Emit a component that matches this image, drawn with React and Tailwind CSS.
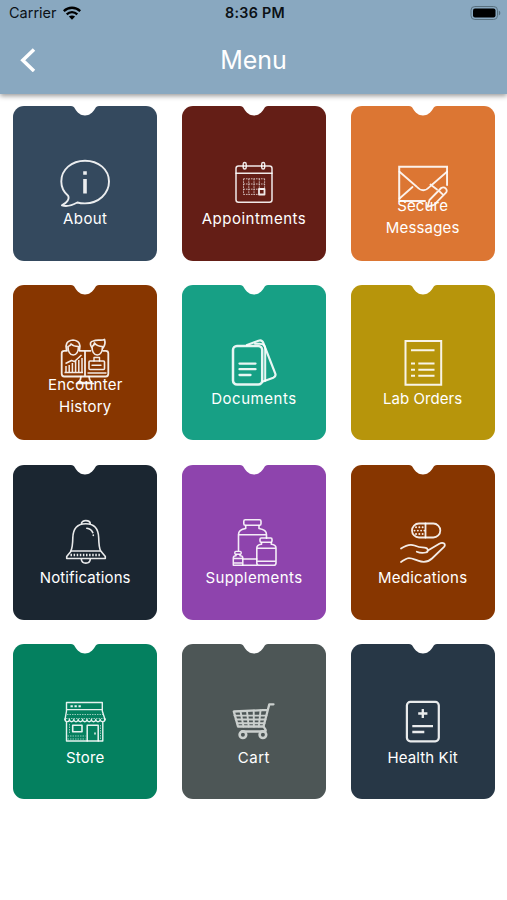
import { clsx } from 'clsx';

const AboutIcon = () => (
  <>
    <path strokeWidth="1.9" d="M25 1.7C11.5 1.7 1.3 10.6 1.3 22.4c0 6 2.6 10.7 6.8 14.3 1.7 3.4-1.4 7.2-6.2 9.6 4.3 1.5 10.3 0 15.4-2.8 2.5.7 5 .9 7.7.9 13.6 0 24-9.8 24-21.8S38.6 1.7 25 1.7z" />
    <path strokeWidth="3.6" strokeLinecap="butt" d="M25 12.2v3.5M25 20v14.5" />
  </>
);

const CalendarIcon = () => (
  <>
    <rect x="7" y="7" width="36" height="36.3" rx="2.5" strokeWidth="1.5" />
    <path strokeWidth="1.4" d="M7 14.2h36" />
    <rect x="14.2" y="3.5" width="3" height="6.5" rx="1.5" strokeWidth="1.4" />
    <rect x="32.7" y="3.5" width="3" height="6.5" rx="1.5" strokeWidth="1.4" />
    <path strokeWidth="1" strokeDasharray="1.6 0.9" strokeLinecap="butt" opacity="0.75" d="M14.500 19.800h21.200M14.500 25h21.200M14.500 30.200h21.200M14.500 35.400h14.500M14.500 19.800v15.600M19.800 19.800v15.600M25 19.800v15.600M30.300 19.800v10M35.600 19.800v10" />
    <rect x="30" y="30" width="5.5" height="5.5" strokeWidth="1.8" />
  </>
);

const MailIcon = () => (
  <>
    <path strokeWidth="2" strokeLinejoin="miter" d="M27 42H1.200V7.800h47.900V26" />
    <path strokeWidth="1.8" d="M1.500 12.700l17 14.800c4.500 5 9 5 13.500 0l17-14.800M1.500 39.500L14.500 28M32.500 25.500l6.500 5" />
    <path strokeWidth="1.8" d="M29.500 47.800l2-6.800 11.700-12c3.300-2 7 1.700 4.800 4.700L36 45.800zM40.500 31.500l5 4.600" />
  </>
);

const EncounterIcon = () => (
  <>
    <path strokeWidth="1.8" d="M7 12.800H4.200c-1.500 0-2.500 1-2.500 2.500v20.500c0 1.800 1 2.700 2.500 2.700h41.600c1.500 0 2.500-1 2.500-2.700V15.300c0-1.500-1-2.500-2.500-2.500H43M19.500 12.800h11M25 13v25.500" />
    <path strokeWidth="1.7" d="M6.500 12c-1.500-5 0-9.500 6.500-10 6.500.5 8 5 6.500 10M8 8.500c0 5 2 8.500 5.200 8.500s5.300-3.500 5.300-8.500C15 8.500 12.500 7.500 11 6c-.5 1.500-1.500 2.300-3 2.500z" />
    <path strokeWidth="1.700" d="M32 10c-3-4-1.500-7 1.500-7 3-2 8 0 11-1.500 1 3 .3 6-1.500 8.500M32 8.500c0 5 2 8.500 5.200 8.500s5.300-3.500 5.300-8.500c-4 0-6-1-8-3.500-.3 2-1 3-2.500 3.500z" />
    <path strokeWidth="1.500" strokeLinecap="butt" d="M6 34v-6M9.200 34v-7M12.400 34v-9M15.600 34V23M18.800 34V22M22 34V20M4.500 34.500H23M5.500 25.500l6-3 3 1 7-6.500" />
    <rect x="29" y="23" width="15.500" height="8.500" rx="1" strokeWidth="1.600" />
    <path strokeWidth="1.400" d="M32 27.300h9M34 23v-3.500h5.500V23M28 35h18" />
    <path strokeWidth="1.700" d="M21 38.500c0 3-1 4.500-2.500 6.200h13c-1.500-1.700-2.500-3.200-2.500-6.200M16.500 45.500h17" />
  </>
);

const DocumentsIcon = () => (
  <>
    <rect x="4" y="8" width="29.200" height="38.500" rx="4" strokeWidth="2.500" />
    <path strokeWidth="2.300" d="M10.500 25.600h16M10.500 31.200h16M10.500 37h11" />
    <path strokeWidth="2.200" d="M18 7l11.500-4.300c2.700-1 4 0 5 2.700l11.800 30.300c.7 2-.1 3.200-2 4L34 43.500" />
    <path strokeWidth="2" d="M26 5.800h4.500c4 0 5.700 1.500 5.700 5v32" />
  </>
);

const LabIcon = () => (
  <path strokeWidth="2" strokeLinecap="butt" strokeLinejoin="miter" d="M7.500 3h35.700v43.700H7.500zM13 12.300h23.500M13 25.600h4M20.300 25.600h16.200M13 31.700h4M20.300 31.700h16.200M13 37.700h4M20.300 37.700h16.200" />
);

const BellIcon = () => (
  <>
    <path strokeWidth="1.600" d="M21.300 6c0-4.500 9-4.500 9 0M10.800 33c1.600-3 1.900-7 2-13C13 11 17 5.800 25.800 5.800S38.500 11 38.700 20c.1 6 .4 10 2 13z" />
    <path strokeWidth="1.600" d="M10.800 33.500L6.700 38.500v2h38.600v-2l-4.100-5M21.300 41c.4 5.500 8.700 5.500 9 0" />
    <path strokeWidth="2.400" strokeDasharray="1.500 1.600" strokeLinecap="butt" d="M10.500 37h31" />
    <path strokeWidth="1.600" d="M26.800 10.300c3 .5 5 2 6 4.300M33.300 17v.4" />
  </>
);

const SupplementsIcon = () => (
  <>
    <rect x="14.800" y="1.800" width="17.200" height="5.400" rx="1.500" strokeWidth="1.600" />
    <path strokeWidth="1.600" d="M16.700 7.500v3c-4 .6-7.200 2.700-7.200 6v16M30 7.500v3c4 .6 7.500 2.700 7.500 6v3.800M9.500 16.700h28M13.800 41h14M13.800 47.300h14" />
    <rect x="31" y="20" width="12" height="4.200" rx="1.200" strokeWidth="1.600" />
    <path strokeWidth="1.600" d="M32.500 24.500v1.700c-3 .3-4.700 1.500-4.700 3.800v15c0 1.600.8 2.300 2.300 2.300h14.600c1.500 0 2.300-.7 2.300-2.300V30c0-2.300-1.700-3.500-4.700-3.800v-1.700M27.800 30.200H47M27.800 43.200H47" />
    <rect x="5.800" y="33.400" width="6.400" height="2.900" rx="1" strokeWidth="1.400" />
    <path strokeWidth="1.500" d="M7 36.500v1.300c-1.500 0-2.700.8-2.700 2.200v7.300h9.500V40c0-1.400-1.300-2.200-2.800-2.200v-1.300M4.300 40.600h9.500M4.300 45h9.500" />
  </>
);

const MedicationsIcon = () => (
  <>
    <rect x="14" y="5.500" width="28.300" height="14" rx="7" strokeWidth="1.800" />
    <path strokeWidth="1.800" d="M27.500 5.500v14" />
    <path strokeWidth="1.900" strokeDasharray="0.1 3.2" d="M18 9.200h8M16.500 12.600h10M18 16h8" />
    <path strokeWidth="1.800" d="M3 30.500c4-2.700 8.500-5 13.500-3 3.500 1.700 6 2 10 2.200 3.800.2 4.500 4 1.300 4.800-3.300.8-6.300.4-9-.8M30.300 32.200l11-6.500c4-2 7.300.5 4.500 3.500L34 40.500c-4.500 4.300-9.500 3.800-14 2.200-6-2.200-8-3.500-11-2.200-2.500 1-4 2.300-6 3.500" />
  </>
);

const StoreIcon = () => (
  <>
    <path strokeWidth="1.400" d="M6.500 14V5.500h35.800V14M6.500 12.600h35.800M6.500 14L5 22.500M42.300 14L45 22.500M6.500 25.500v18.500h36.300V25.500" />
    <path strokeWidth="1.400" d="M5 22c0 3.400 4 3.400 4.400.5.400 2.900 4 2.900 4.400 0 .4 2.900 4 2.900 4.400 0 .4 2.900 4 2.900 4.400 0 .4 2.900 4 2.900 4.400 0 .4 2.900 4 2.900 4.400 0 .4 2.900 4 2.900 4.400 0 .4 2.900 4 2.900 4.400 0 .4 2.900 4.800 2.900 4.800-.5" />
    <path strokeWidth="2" strokeLinecap="butt" d="M10.500 9.300h2.300M14.500 9.300h2.300M18.500 9.300h2.300" />
    <path strokeWidth="0.900" strokeDasharray="1.500 1" strokeLinecap="butt" opacity="0.7" d="M7 17.500h36M6 21.500h38M7.500 39h18M7.500 42h18M40.500 28v15M9.500 27v10" />
    <rect x="12.700" y="28.200" width="9.300" height="6.500" strokeWidth="1.600" />
    <path strokeWidth="1.500" d="M27.200 44V28.200h11V44M35 36v1" />
  </>
);

const CartIcon = () => (
  <>
    <path strokeWidth="2.300" d="M44.500 7.300h-4.200L34.500 29.500H9L4.800 14.500l33.500-1.600" />
    <path strokeWidth="1.900" d="M5.500 18.600h32M6.700 22.500h29.800M8 26.200h27.500M11.500 14.500l3 15M18 14.200l1.700 15.300M24.700 13.800l.2 15.700M31.500 13.500l-1.700 16" />
    <path strokeWidth="2.300" d="M34.500 29.500l2 3.200c.5 1-.1 1.800-1.200 1.800H13" />
    <circle cx="13.900" cy="37.700" r="3.300" strokeWidth="2.600" />
    <circle cx="33.900" cy="37.700" r="3.300" strokeWidth="2.600" />
  </>
);

const HealthIcon = () => (
  <>
    <rect x="8.900" y="4.900" width="31.900" height="39.400" rx="3.500" strokeWidth="2.200" />
    <path strokeWidth="2.300" strokeLinecap="butt" d="M24.800 11.900v9.200M20.200 16.500h9.200M14.300 29.200H35M14.300 35h12" />
  </>
);

const items = [
  { lines: ['About'], icon: AboutIcon, color: 'bg-[#34495e]', tracking: 'tracking-[0.4px]' },
  { lines: ['Appointments'], icon: CalendarIcon, color: 'bg-[#641e16]', tracking: 'tracking-[0.5px]' },
  { lines: ['Secure', 'Messages'], icon: MailIcon, color: 'bg-[#dc7633]', tracking: 'tracking-[0.15px]' },
  { lines: ['Encounter', 'History'], icon: EncounterIcon, color: 'bg-[#873600]', tracking: 'tracking-[0.25px]' },
  { lines: ['Documents'], icon: DocumentsIcon, color: 'bg-[#17a085]', tracking: 'tracking-[0.55px]' },
  { lines: ['Lab Orders'], icon: LabIcon, color: 'bg-[#b7950b]', tracking: 'tracking-[0.05px]' },
  { lines: ['Notifications'], icon: BellIcon, color: 'bg-[#1b2631]', tracking: 'tracking-[0.1px]' },
  { lines: ['Supplements'], icon: SupplementsIcon, color: 'bg-[#8e44ad]', tracking: 'tracking-[0.4px]' },
  { lines: ['Medications'], icon: MedicationsIcon, color: 'bg-[#873600]', tracking: 'tracking-[0.25px]' },
  { lines: ['Store'], icon: StoreIcon, color: 'bg-[#04805f]', tracking: 'tracking-[0.15px]' },
  { lines: ['Cart'], icon: CartIcon, color: 'bg-[#4d5656]', tracking: 'tracking-[0.5px]', iconColor: 'text-[#cbd0ce]' },
  { lines: ['Health Kit'], icon: HealthIcon, color: 'bg-[#273746]', tracking: 'tracking-[0.1px]' },
];

function MenuCard({ item }) {
  const Icon = item.icon;

  return (
    <button className={clsx('relative flex h-[154.7px] flex-col items-center rounded-[11px] pt-[52.8px] text-white', item.color)}>
      {/* Notch */}
      <svg className="absolute -top-px left-1/2 h-[11px] w-[30px] -translate-x-1/2" viewBox="0 0 30 11">
        <path fill="#fff" d="M1 0h28v1c-2 .2-3 1-4 2.700C22.500 7.700 19.500 10.400 15 10.400S7.500 7.700 5 3.700C4 2 3 1.200 1 1z" />
      </svg>

      <svg
        className={clsx('h-[50px] w-[50px] shrink-0', item.iconColor || 'text-white/90')}
        viewBox="0 0 50 50"
        fill="none"
        stroke="currentColor"
        strokeLinecap="round"
        strokeLinejoin="round"
      >
        <Icon />
      </svg>

      <div
        className={clsx(
          'relative text-center text-[15px] leading-[22px] whitespace-nowrap',
          item.lines.length > 1 ? '-mt-[14px]' : '-mt-[0.5px]',
          item.tracking
        )}
      >
        {item.lines.map((line) => (
          <div key={line}>{line}</div>
        ))}
      </div>
    </button>
  );
}

export default function App() {
  return (
    <div className="h-[900px] w-[507px] overflow-hidden bg-white font-['Inter',sans-serif]">
      <header className="relative h-[94px] bg-[#89a8c0] shadow-[0_2px_5px_rgba(0,0,0,0.4)]">
        {/* Status bar */}
        <div className="grid h-[27px] grid-cols-3 items-center pr-[6px] pl-[9px] text-[#0c1116]">
          <div className="flex items-center gap-[6px]">
            <span className="text-[14.5px] leading-none">Carrier</span>
            <svg className="-mt-px h-[14px] w-[18px]" viewBox="0 0 18 14" fill="none" stroke="#000" strokeWidth="2.3">
              <path d="M.8 5.100c4.700-4.500 11.700-4.500 16.400 0M3.700 8.300c3-2.900 7.600-2.900 10.600 0" />
              <path fill="#000" stroke="none" d="M9 13.800l-3.100-3.200c1.800-1.600 4.400-1.600 6.200 0z" />
            </svg>
          </div>
          <span className="text-center text-[14.3px] leading-none font-semibold tracking-[0.3px] whitespace-nowrap">8:36 PM</span>
          <svg className="-mt-px h-[14px] w-[31px] justify-self-end" viewBox="0 0 31 14">
            <rect x="1" y=".5" width="26.500" height="13" rx="3.800" fill="none" stroke="#58707f" />
            <rect x="3" y="2.500" width="22.500" height="9" rx="2" fill="#000" />
            <path fill="#58707f" d="M28.800 4.500c2 .8 2 4.200 0 5z" />
          </svg>
        </div>

        {/* Title bar */}
        <div className="grid h-[66px] grid-cols-3 items-center px-5">
          <button aria-label="Back">
            <svg className="h-[24px] w-[16px]" viewBox="0 0 16 24" fill="none" stroke="#fff" strokeWidth="3.5">
              <path d="M14 1.500L2.800 12.300 14 23" />
            </svg>
          </button>
          <h1 className="text-center text-[25px] leading-none text-white">Menu</h1>
        </div>
      </header>

      <main className="grid grid-cols-3 gap-x-[24.6px] gap-y-[24.8px] pt-[12px] pr-[12.3px] pl-[13.2px]">
        {items.map((item) => (
          <MenuCard key={item.lines.join(' ')} item={item} />
        ))}
      </main>
    </div>
  );
}
